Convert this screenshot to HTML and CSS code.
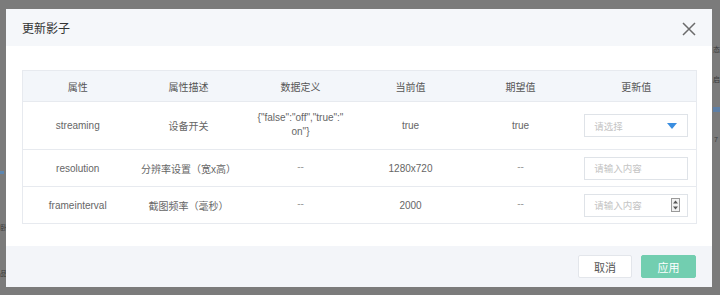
FILE: index.html
```html
<!DOCTYPE html>
<html lang="zh">
<head>
  <meta charset="UTF-8" />
  <title>更新影子</title>
  <link rel="stylesheet" href="styles.css">
</head>
<body>

  <!-- restos de la página de fondo -->
  <div class="bg-bits">
    <span class="bit b1">态</span>
    <span class="bit b2">启</span>
    <span class="bit b3"></span>
    <span class="bit b4">7</span>
    <span class="bit b5"></span>
    <span class="bit b6">卧</span>
    <span class="bit b7">品</span>
  </div>

  <div class="modal">
    <div class="modal-head">
      <span class="modal-title">更新影子</span>
      <svg class="close" width="14" height="14" viewBox="0 0 14 14">
        <path d="M1 1 L13 13 M13 1 L1 13" stroke="#6b6b6b" stroke-width="1.5" fill="none"/>
      </svg>
    </div>

    <div class="modal-body">
      <table class="grid">
        <colgroup>
          <col class="c1">
          <col class="c2">
          <col class="c3">
          <col class="c4">
          <col class="c5">
          <col class="c6">
        </colgroup>
        <tr class="head">
          <th>属性</th>
          <th>属性描述</th>
          <th>数据定义</th>
          <th>当前值</th>
          <th>期望值</th>
          <th>更新值</th>
        </tr>
        <tr class="tall">
          <td>streaming</td>
          <td>设备开关</td>
          <td class="def">{"false":"off","true":"<br>on"}</td>
          <td>true</td>
          <td>true</td>
          <td>
            <div class="field">
              <span class="ph">请选择</span>
              <span class="caret"></span>
            </div>
          </td>
        </tr>
        <tr>
          <td>resolution</td>
          <td>分辨率设置（宽x高）</td>
          <td class="dash">--</td>
          <td>1280x720</td>
          <td class="dash">--</td>
          <td>
            <div class="field">
              <span class="ph">请输入内容</span>
            </div>
          </td>
        </tr>
        <tr>
          <td>frameinterval</td>
          <td>截图频率（毫秒）</td>
          <td class="dash">--</td>
          <td>2000</td>
          <td class="dash">--</td>
          <td>
            <div class="field">
              <span class="ph">请输入内容</span>
              <svg class="spin" width="9" height="14" viewBox="0 0 9 14">
                <rect x="0.5" y="0.5" width="8" height="13" fill="#f2f2f2" stroke="#9a9a9a"/>
                <path d="M2 5.5 L4.5 2.5 L7 5.5 Z" fill="#555"/>
                <path d="M2 8.5 L4.5 11.5 L7 8.5 Z" fill="#555"/>
              </svg>
            </div>
          </td>
        </tr>
      </table>
    </div>

    <div class="modal-foot">
      <button class="btn">取消</button>
      <button class="btn primary">应用</button>
    </div>
  </div>

</body>
</html>
```

FILE: styles.css
```css
* {
  margin: 0;
  padding: 0;
  box-sizing: border-box;
}

body {
  font-family: "Liberation Sans", "Noto Sans CJK SC", sans-serif;
  background: #7b7b7b;
  width: 720px;
  height: 295px;
  overflow: hidden;
  position: relative;
  padding: 9px 8px 0 6px;
}

.bg-bits .bit {
  position: absolute;
  font-size: 7px;
  color: #3a3a3a;
}

.b1 { left: 713px; top: 44px; }
.b2 { left: 713px; top: 74px; }
.b3 { left: 713px; top: 107px; width: 7px; height: 5px; background: #5d7fa6; font-size: 0; }
.b4 { left: 714px; top: 136px; }
.b5 { left: 0; top: 171px; width: 4px; height: 3px; background: #5d86b0; font-size: 0; }
.b6 { left: 0; top: 222px; color: #444; }
.b7 { left: 0; top: 268px; color: #444; }

.modal {
  position: relative;
  width: 706px;
  height: 278px;
  background: #fff;
  display: flex;
  flex-direction: column;
}

.modal-head {
  height: 37px;
  background: #f5f7fa;
  display: flex;
  align-items: center;
  justify-content: space-between;
  padding: 0 16px 0 16px;
}

.modal-title {
  font-size: 12px;
  color: #333;
}

.close {
  margin-top: 2px;
}

.modal-body {
  height: 200px;
  padding: 24px 16px 0 16px;
}

.grid {
  width: 674px;
  border-collapse: collapse;
  border: 1px solid #e7eaef;
  table-layout: fixed;
}

.c1 { width: 110px; }
.c2 { width: 112px; }
.c3 { width: 112px; }
.c4 { width: 108px; }
.c5 { width: 112px; }
.c6 { width: 120px; }

.grid th,
.grid td {
  text-align: center;
  vertical-align: middle;
  font-size: 10px;
  color: #666;
  font-weight: normal;
  border-bottom: 1px solid #e7eaef;
  padding: 0;
}

.grid th {
  height: 31px;
  background: #f3f6fa;
  color: #555;
}

.grid td {
  height: 37px;
}

.grid tr.tall td {
  height: 48px;
}

.grid td.def {
  line-height: 14px;
  padding-bottom: 2px;
}

.grid .dash {
  color: #999;
  padding-bottom: 4px;
}

.field {
  width: 104px;
  height: 23px;
  margin: 0 auto;
  border: 1px solid #dfe3e8;
  display: flex;
  align-items: center;
  justify-content: space-between;
  padding: 0 9px 0 9px;
}

.ph {
  font-size: 9.5px;
  color: #c4c4c4;
}

.caret {
  width: 0;
  height: 0;
  border-left: 5px solid transparent;
  border-right: 5px solid transparent;
  border-top: 6px solid #3b8ee0;
  margin-right: 1px;
}

.spin {
  margin-right: -2px;
}

.modal-foot {
  flex: 1;
  background: #f3f5f9;
  display: flex;
  justify-content: flex-end;
  align-items: center;
  gap: 9px;
  padding: 0 16px 0 16px;
}

.btn {
  font-family: inherit;
  font-size: 11px;
  height: 23px;
  width: 54px;
  border: 1px solid #e3e6eb;
  background: #fff;
  color: #555;
  border-radius: 2px;
}

.btn.primary {
  width: 55px;
  background: #72ceb0;
  border-color: #72ceb0;
  color: #fff;
}
```
